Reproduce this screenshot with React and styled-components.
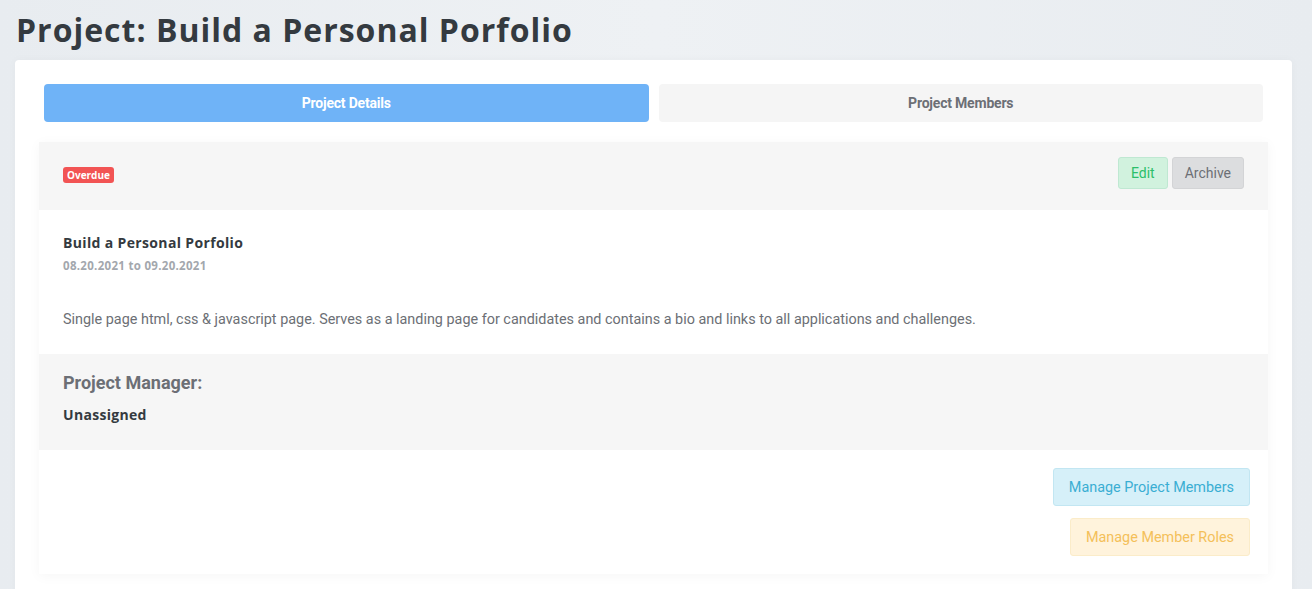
import React from 'react'
import styled, { createGlobalStyle } from 'styled-components'

const Global = createGlobalStyle`
  body {
    margin: 0;
    background: linear-gradient(90deg, #e8ecf0 0%, #eef1f4 50%, #e8ecf0 100%);
    font-family: Roboto, "Liberation Sans", sans-serif;
  }
`

const Page = styled.div`
  padding: 10px 20px 0 15px;
  height: 589px;
  box-sizing: border-box;
  overflow: hidden;
`

const Title = styled.h1`
  margin: 0 0 10px 1px;
  font-family: "Open Sans", sans-serif;
  font-size: 32px;
  font-weight: 700;
  line-height: 40px;
  color: #343a40;
  letter-spacing: 1px;
`

const Card = styled.div`
  background: #fff;
  border-radius: 4px;
  padding: 24px 24px 30px;
  box-shadow: 0 0 10px rgba(0, 0, 0, 0.03);
`

const Tabs = styled.div`
  display: flex;
  gap: 10px;
  padding: 0 5px;
  margin-bottom: 20px;
`

const Tab = styled.button`
  flex: 1;
  height: 38px;
  border: none;
  border-radius: 4px;
  font-family: Roboto, sans-serif;
  font-size: 14px;
  font-weight: 700;
  letter-spacing: -0.2px;
  background: ${p => (p.$active ? '#6fb3f7' : '#f5f5f5')};
  color: ${p => (p.$active ? '#fff' : '#6c6f75')};
`

const Panel = styled.div`
  box-shadow: 0 2px 12px rgba(0, 0, 0, 0.04);
`

const Section = styled.div`
  background: ${p => (p.$grey ? '#f6f6f6' : '#fff')};
  padding: ${p => p.$pad || '24px'};
`

const HeaderRow = styled(Section)`
  display: flex;
  align-items: center;
  justify-content: space-between;
  height: 68px;
  box-sizing: border-box;
  padding: 0 24px;
`

const Badge = styled.span`
  background: #f25454;
  color: #fff;
  font-family: "Open Sans", sans-serif;
  font-size: 10px;
  font-weight: 700;
  padding: 2px 4px;
  border-radius: 3px;
  line-height: 12px;
  margin-top: -2px;
`

const Actions = styled.div`
  display: flex;
  gap: 4px;
  margin-top: -6px;
`

const SmallBtn = styled.button`
  height: 32px;
  padding: 0 12px;
  border-radius: 3px;
  font-family: Roboto, sans-serif;
  font-size: 14px;
  border: 1px solid ${p => (p.$green ? '#bfe8d2' : '#d3d4d6')};
  background: ${p => (p.$green ? '#d1f2de' : '#dcdddf')};
  color: ${p => (p.$green ? '#2bbf6a' : '#6c6f75')};
`

const ProjName = styled.div`
  font-family: "Open Sans", sans-serif;
  font-size: 14px;
  font-weight: 700;
  letter-spacing: 0.35px;
  color: #343a40;
  margin-top: 7px;
`

const Dates = styled.div`
  font-family: "Open Sans", sans-serif;
  font-size: 11.5px;
  font-weight: 700;
  letter-spacing: 0.3px;
  color: #a3a7ad;
  margin-top: 6px;
`

const Desc = styled.p`
  margin: 38px 0 0;
  font-size: 14.4px;
  color: #6c6f75;
`

const Label = styled.div`
  font-size: 18px;
  font-weight: 700;
  color: #6c6f75;
`

const Value = styled.div`
  font-family: "Open Sans", sans-serif;
  font-size: 14px;
  font-weight: 700;
  letter-spacing: 0.3px;
  color: #343a40;
  margin-top: 12px;
`

const Footer = styled(Section)`
  display: flex;
  flex-direction: column;
  align-items: flex-end;
  gap: 12px;
  padding: 18px 18px 18px;
`

const BigBtn = styled.button`
  height: 38px;
  padding: 0 15px;
  border-radius: 3px;
  font-family: Roboto, sans-serif;
  font-size: 14.4px;
  border: 1px solid ${p => (p.$tone === 'info' ? '#c2e6f2' : '#fbecc9')};
  background: ${p => (p.$tone === 'info' ? '#d6f0f9' : '#fff3dc')};
  color: ${p => (p.$tone === 'info' ? '#3aaed3' : '#f4c05a')};
`

export default function App() {
  return (
    <>
      <Global />
      <Page>
        <Title>Project: Build a Personal Porfolio</Title>
        <Card>
          <Tabs>
            <Tab $active>Project Details</Tab>
            <Tab>Project Members</Tab>
          </Tabs>
          <Panel>
            <HeaderRow $grey>
              <Badge>Overdue</Badge>
              <Actions>
                <SmallBtn $green>Edit</SmallBtn>
                <SmallBtn>Archive</SmallBtn>
              </Actions>
            </HeaderRow>
            <Section $pad="16px 24px 26px">
              <ProjName>Build a Personal Porfolio</ProjName>
              <Dates>08.20.2021 to 09.20.2021</Dates>
              <Desc>
                Single page html, css &amp; javascript page. Serves as a landing page for candidates and contains a bio and links to all applications and challenges.
              </Desc>
            </Section>
            <Section $grey $pad="18px 24px 26px">
              <Label>Project Manager:</Label>
              <Value>Unassigned</Value>
            </Section>
            <Footer>
              <BigBtn $tone="info">Manage Project Members</BigBtn>
              <BigBtn $tone="warn">Manage Member Roles</BigBtn>
            </Footer>
          </Panel>
        </Card>
      </Page>
    </>
  )
}
